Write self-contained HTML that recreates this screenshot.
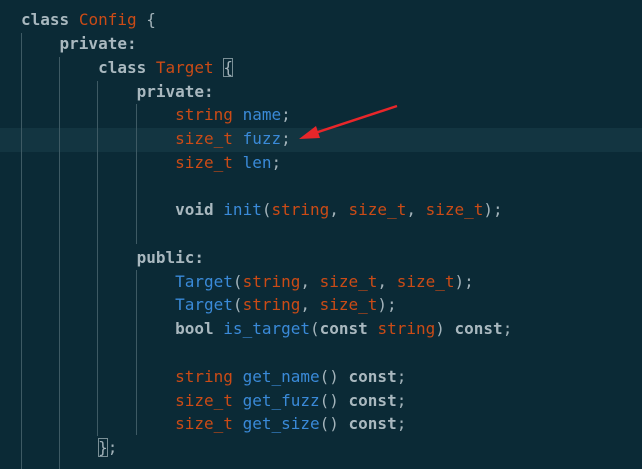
<!DOCTYPE html><html><head><style>
body{margin:0;width:642px;height:469px;background:#0b2a36;overflow:hidden;position:relative;font-family:"DejaVu Sans Mono",monospace;font-size:16px}
.l{position:absolute;left:21px;height:24px;line-height:24px;white-space:pre;color:#a3b3ba}
.k{color:#a9b8bf;font-weight:bold}.o{color:#cb4b16}.b{color:#3a8ad8}
.g{position:absolute;width:1px;background:#3e5a64}
.bx{outline:1px solid #7a8f96;outline-offset:-1px}
</style></head><body>
<div style="position:absolute;left:0;top:128px;width:642px;height:24px;background:#133541"></div>
<div class="g" style="left:21px;top:33px;height:436px"></div>
<div class="g" style="left:59px;top:57px;height:412px"></div>
<div class="g" style="left:97px;top:81px;height:355px"></div>
<div class="g" style="left:136px;top:104px;height:140px"></div>
<div class="g" style="left:136px;top:270px;height:165px"></div>
<div class="l" style="top:8px"><span class="k">class</span> <span class="o">Config</span> {</div>
<div class="l" style="top:32px">    <span class="k">private:</span></div>
<div class="l" style="top:56px">        <span class="k">class</span> <span class="o">Target</span> <span class="bx">{</span></div>
<div class="l" style="top:80px">            <span class="k">private:</span></div>
<div class="l" style="top:103px">                <span class="o">string</span> <span class="b">name</span>;</div>
<div class="l" style="top:127px">                <span class="o">size_t</span> <span class="b">fuzz</span>;</div>
<div class="l" style="top:151px">                <span class="o">size_t</span> <span class="b">len</span>;</div>
<div class="l" style="top:198px">                <span class="k">void</span> <span class="b">init</span>(<span class="o">string</span>, <span class="o">size_t</span>, <span class="o">size_t</span>);</div>
<div class="l" style="top:246px">            <span class="k">public:</span></div>
<div class="l" style="top:270px">                <span class="b">Target</span>(<span class="o">string</span>, <span class="o">size_t</span>, <span class="o">size_t</span>);</div>
<div class="l" style="top:293px">                <span class="b">Target</span>(<span class="o">string</span>, <span class="o">size_t</span>);</div>
<div class="l" style="top:317px">                <span class="k">bool</span> <span class="b">is_target</span>(<span class="k">const</span> <span class="o">string</span>) <span class="k">const</span>;</div>
<div class="l" style="top:365px">                <span class="o">string</span> <span class="b">get_name</span>() <span class="k">const</span>;</div>
<div class="l" style="top:389px">                <span class="o">size_t</span> <span class="b">get_fuzz</span>() <span class="k">const</span>;</div>
<div class="l" style="top:412px">                <span class="o">size_t</span> <span class="b">get_size</span>() <span class="k">const</span>;</div>
<div class="l" style="top:436px">        <span class="bx">}</span>;</div>
<svg style="position:absolute;left:0;top:0" width="642" height="469"><line x1="397" y1="106" x2="312" y2="134" stroke="#e8262a" stroke-width="2.5"/><polygon points="299,139 316,126 320,138" fill="#e8262a"/></svg>
</body></html>
